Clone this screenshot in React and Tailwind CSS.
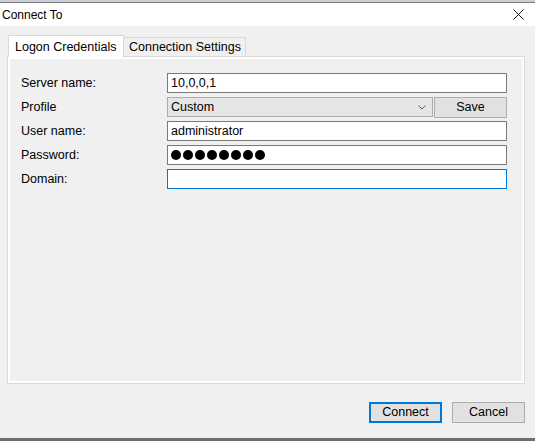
import React from "react";

function Field({ label, children }) {
  return (
    <div className="flex items-start h-[20px]">
      <div className="w-[146px] h-[20px] flex items-center">{label}</div>
      {children}
    </div>
  );
}

function App() {
  return (
    <div className="w-[535px] h-[441px] bg-[#f0f0f0] flex flex-col font-['Liberation_Sans',Arial,sans-serif] text-black overflow-hidden">
      <div className="h-[2px] bg-[#c9ced6]" />
      <div className="h-px bg-[#7a7a7a]" />

      {/* title bar */}
      <div className="h-[23px] bg-white flex items-center justify-between pl-[2px] pr-[10px]">
        <span className="text-[12px]">Connect To</span>
        <svg width="11" height="11" viewBox="0 0 11 11" className="mr-px">
          <path d="M0.5 0.5 L10.5 10.5 M10.5 0.5 L0.5 10.5" stroke="#111" strokeWidth="1" />
        </svg>
      </div>

      <div className="flex-1 flex flex-col pl-[7px] pr-[10px] pt-[9px]">
        {/* tabs */}
        <div className="flex items-end h-[21px] pl-px text-[12.5px]">
          <div className="relative z-10 h-[22px] -mb-px w-[116px] bg-white border-t border-l border-r border-[#d9d9d9] flex items-start pt-[2px] pl-[6px]">
            Logon Credentials
          </div>
          <div className="h-[19px] w-[122px] bg-[#f0f0f0] border-t border-r border-[#d9d9d9] flex items-center pl-[5px]">
            Connection Settings
          </div>
        </div>

        {/* panel */}
        <div className="h-[328px] border border-[#d9d9d9] bg-white p-[2px]">
          <div className="h-full bg-[#f0f0f0] pl-[11px] pt-[14px] flex flex-col gap-[4px] text-[12.5px]">
            <Field label="Server name:">
              <div className="w-[340px] h-[20px] bg-white border border-[#7a7a7a] flex items-center pl-[3px]">
                10,0,0,1
              </div>
            </Field>
            <Field label="Profile">
              <div className="w-[266px] h-[20px] bg-[#e5e5e5] border border-[#acacac] flex items-center justify-between pl-[3px] pr-[6px]">
                <span>Custom</span>
                <svg width="8" height="5" viewBox="0 0 8 5">
                  <path d="M0.5 0.5 L4 4 L7.5 0.5" stroke="#5f5f5f" strokeWidth="1" fill="none" />
                </svg>
              </div>
              <div className="ml-px w-[73px] h-[21px] bg-[#e1e1e1] border border-[#adadad] flex items-center justify-center">
                Save
              </div>
            </Field>
            <Field label="User name:">
              <div className="w-[340px] h-[20px] bg-white border border-[#7a7a7a] flex items-center pl-[3px]">
                administrator
              </div>
            </Field>
            <Field label="Password:">
              <div className="w-[340px] h-[20px] bg-white border border-[#7a7a7a] flex items-center pl-[3px] gap-[2px]">
                {[0, 1, 2, 3, 4, 5, 6, 7].map((i) => (
                  <div key={i} className="w-[10px] h-[10px] rounded-full bg-black" />
                ))}
              </div>
            </Field>
            <Field label="Domain:">
              <div className="w-[340px] h-[20px] bg-white border border-[#0078d7]" />
            </Field>
          </div>
        </div>

        {/* buttons */}
        <div className="flex justify-end gap-[10px] mt-[18px] text-[12.5px]">
          <button className="w-[73px] h-[21px] bg-[#e1e1e1] border-2 border-[#0078d7] flex items-center justify-center">
            Connect
          </button>
          <button className="w-[73px] h-[21px] bg-[#e1e1e1] border border-[#adadad] flex items-center justify-center">
            Cancel
          </button>
        </div>
      </div>

      <div className="h-[3px] bg-[#6e6e6e]" />
    </div>
  );
}

export default App;
